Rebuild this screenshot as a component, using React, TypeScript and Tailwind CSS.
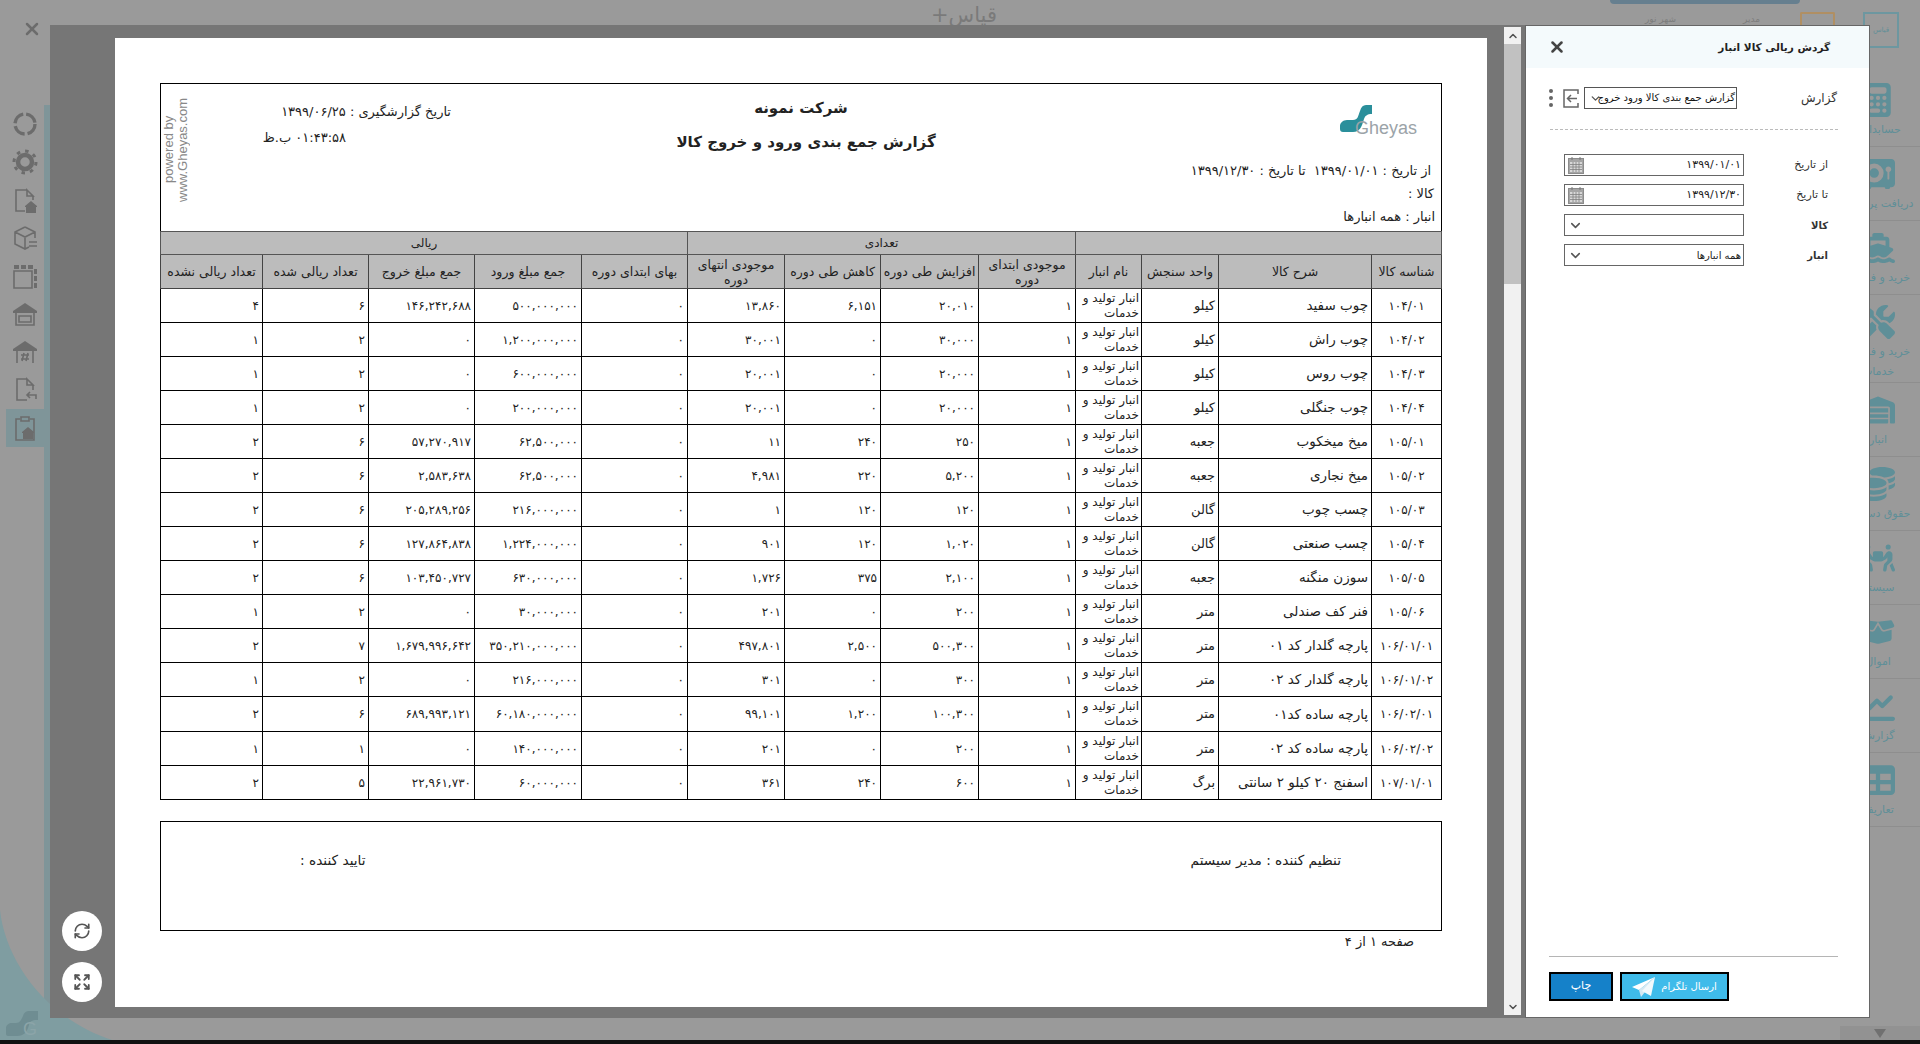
import { ChevronDown, ChevronUp, Expand, RefreshCw, X } from "lucide-react";
import {
  FaBoxOpen,
  FaCalculator,
  FaChartLine,
  FaCoins,
  FaPeopleCarryBox,
  FaScrewdriverWrench,
  FaShip,
  FaTable,
  FaVault,
  FaWarehouse,
} from "react-icons/fa6";
import type { ReactNode } from "react";

const WH = "انبار تولید و خدمات";

const rows: string[][] = [
  ["۱۰۴/۰۱", "چوب سفید", "کیلو", WH, "۱", "۲۰,۰۱۰", "۶,۱۵۱", "۱۳,۸۶۰", "۰", "۵۰۰,۰۰۰,۰۰۰", "۱۴۶,۲۴۲,۶۸۸", "۶", "۴"],
  ["۱۰۴/۰۲", "چوب راش", "کیلو", WH, "۱", "۳۰,۰۰۰", "۰", "۳۰,۰۰۱", "۰", "۱,۲۰۰,۰۰۰,۰۰۰", "۰", "۲", "۱"],
  ["۱۰۴/۰۳", "چوب روس", "کیلو", WH, "۱", "۲۰,۰۰۰", "۰", "۲۰,۰۰۱", "۰", "۶۰۰,۰۰۰,۰۰۰", "۰", "۲", "۱"],
  ["۱۰۴/۰۴", "چوب جنگلی", "کیلو", WH, "۱", "۲۰,۰۰۰", "۰", "۲۰,۰۰۱", "۰", "۲۰۰,۰۰۰,۰۰۰", "۰", "۲", "۱"],
  ["۱۰۵/۰۱", "میخ میخکوب", "جعبه", WH, "۱", "۲۵۰", "۲۴۰", "۱۱", "۰", "۶۲,۵۰۰,۰۰۰", "۵۷,۲۷۰,۹۱۷", "۶", "۲"],
  ["۱۰۵/۰۲", "میخ نجاری", "جعبه", WH, "۱", "۵,۲۰۰", "۲۲۰", "۴,۹۸۱", "۰", "۶۲,۵۰۰,۰۰۰", "۲,۵۸۳,۶۳۸", "۶", "۲"],
  ["۱۰۵/۰۳", "چسب چوب", "گالن", WH, "۱", "۱۲۰", "۱۲۰", "۱", "۰", "۲۱۶,۰۰۰,۰۰۰", "۲۰۵,۲۸۹,۲۵۶", "۶", "۲"],
  ["۱۰۵/۰۴", "چسب صنعتی", "گالن", WH, "۱", "۱,۰۲۰", "۱۲۰", "۹۰۱", "۰", "۱,۲۲۴,۰۰۰,۰۰۰", "۱۲۷,۸۶۴,۸۳۸", "۶", "۲"],
  ["۱۰۵/۰۵", "سوزن منگنه", "جعبه", WH, "۱", "۲,۱۰۰", "۳۷۵", "۱,۷۲۶", "۰", "۶۳۰,۰۰۰,۰۰۰", "۱۰۳,۴۵۰,۷۲۷", "۶", "۲"],
  ["۱۰۵/۰۶", "فنر کف صندلی", "متر", WH, "۱", "۲۰۰", "۰", "۲۰۱", "۰", "۳۰,۰۰۰,۰۰۰", "۰", "۲", "۱"],
  ["۱۰۶/۰۱/۰۱", "پارچه گلدار کد ۰۱", "متر", WH, "۱", "۵۰۰,۳۰۰", "۲,۵۰۰", "۴۹۷,۸۰۱", "۰", "۳۵۰,۲۱۰,۰۰۰,۰۰۰", "۱,۶۷۹,۹۹۶,۶۴۲", "۷", "۲"],
  ["۱۰۶/۰۱/۰۲", "پارچه گلدار کد ۰۲", "متر", WH, "۱", "۳۰۰", "۰", "۳۰۱", "۰", "۲۱۶,۰۰۰,۰۰۰", "۰", "۲", "۱"],
  ["۱۰۶/۰۲/۰۱", "پارچه ساده کد۰۱", "متر", WH, "۱", "۱۰۰,۳۰۰", "۱,۲۰۰", "۹۹,۱۰۱", "۰", "۶۰,۱۸۰,۰۰۰,۰۰۰", "۶۸۹,۹۹۳,۱۲۱", "۶", "۲"],
  ["۱۰۶/۰۲/۰۲", "پارچه ساده کد ۰۲", "متر", WH, "۱", "۲۰۰", "۰", "۲۰۱", "۰", "۱۴۰,۰۰۰,۰۰۰", "۰", "۱", "۱"],
  ["۱۰۷/۰۱/۰۱", "اسفنج ۲۰ کیلو ۲ سانتی", "برگ", WH, "۱", "۶۰۰", "۲۴۰", "۳۶۱", "۰", "۶۰,۰۰۰,۰۰۰", "۲۲,۹۶۱,۷۳۰", "۵", "۲"],
];

const headers = [
  "شناسه کالا",
  "شرح کالا",
  "واحد سنجش",
  "نام انبار",
  "موجودی ابتدای دوره",
  "افزایش طی دوره",
  "کاهش طی دوره",
  "موجودی انتهای دوره",
  "بهای ابتدای دوره",
  "جمع مبلغ ورود",
  "جمع مبلغ خروج",
  "تعداد ریالی شده",
  "تعداد ریالی نشده",
];

const colClasses = [
  "w-[70px]",
  "w-[153px]",
  "w-[77px]",
  "w-[66px]",
  "w-[97px]",
  "w-[98px]",
  "w-[96px]",
  "w-[97px]",
  "w-[106px]",
  "w-[107px]",
  "w-[106px]",
  "w-[106px]",
  "w-[102px]",
];

const sideMenu = [
  { label: "حسابداری", Icon: FaCalculator, h: "h-[74px]", wrap: "whitespace-nowrap" },
  { label: "دریافت پرداخت", Icon: FaVault, h: "h-[74px]", wrap: "whitespace-nowrap" },
  { label: "خرید و فروش", Icon: FaShip, h: "h-[74px]", wrap: "whitespace-nowrap" },
  { label: "خرید و فروش خدمات", Icon: FaScrewdriverWrench, h: "h-[88px]", wrap: "w-[70px]" },
  { label: "انبار", Icon: FaWarehouse, h: "h-[74px]", wrap: "whitespace-nowrap" },
  { label: "حقوق دستمزد", Icon: FaCoins, h: "h-[74px]", wrap: "whitespace-nowrap" },
  { label: "سیستم", Icon: FaPeopleCarryBox, h: "h-[74px]", wrap: "whitespace-nowrap" },
  { label: "اموال", Icon: FaBoxOpen, h: "h-[74px]", wrap: "whitespace-nowrap" },
  { label: "گزارش", Icon: FaChartLine, h: "h-[74px]", wrap: "whitespace-nowrap" },
  { label: "تعاریف", Icon: FaTable, h: "h-[74px]", wrap: "whitespace-nowrap" },
];

const cellFont = (i: number) => {
  if (i === 0) return "px-[3px] text-center text-[12px] tracking-[1.3px] whitespace-nowrap";
  if (i === 1) return "px-[3px] text-right text-[13.500px] whitespace-nowrap";
  if (i === 2) return "px-[3px] text-right text-[13px] whitespace-nowrap";
  if (i === 3) return "px-[2px] text-right text-[12px] leading-[15px] whitespace-normal";
  return "px-[3px] text-right text-[12px] whitespace-nowrap";
};

const LeftIcon = ({ children, active }: { children: ReactNode; active?: boolean }) => (
  <div
    className={`flex h-[38px] w-[38px] items-center justify-center ${
      active ? "bg-[#7f9599]" : ""
    }`}
  >
    <svg
      width="26"
      height="26"
      viewBox="0 0 26 26"
      fill="none"
      stroke="#6c6c6c"
      strokeWidth="1.6"
    >
      {children}
    </svg>
  </div>
);

const House = ({ x, y }: { x: number; y: number }) => (
  <path
    transform={`translate(${x} ${y})`}
    d="M0 5 6 0l6 5v1h-1v6H1V6H0z"
    fill="#6c6c6c"
    stroke="none"
  />
);

const CalendarIcon = () => (
  <svg width="16" height="17" viewBox="0 0 16 17" className="shrink-0">
    <rect x="0.5" y="1.5" width="15" height="15" fill="#a5a5a5" stroke="#8c8c8c" />
    <rect x="2" y="5" width="12" height="10" fill="#d8d8d8" />
    <path d="M2 7.5h12M2 10h12M2 12.5h12M5 5v10M8 5v10M11 5v10" stroke="#808080" strokeWidth="0.8" />
    <path d="M4 0v3M12 0v3" stroke="#777" />
  </svg>
);

const DateField = ({ label, value }: { label: string; value: string }) => (
  <div className="flex items-center">
    <span className="w-[84px] text-[11px] text-[#333]">{label}</span>
    <div className="flex h-[22px] w-[180px] items-center justify-between border border-[#666] pr-[2px] pl-[3px] text-[11px] text-[#222]">
      <span>{value}</span>
      <CalendarIcon />
    </div>
  </div>
);

const SelectField = ({ label, value }: { label: string; value: string }) => (
  <div className="flex items-center">
    <span className="w-[84px] text-[10px] font-bold text-[#333]">{label}</span>
    <div className="flex h-[22px] w-[180px] items-center justify-between border border-[#666] pr-[2px] pl-[3px] text-[10px] text-[#222]">
      <span>{value}</span>
      <ChevronDown size={15} strokeWidth={2.5} color="#555" />
    </div>
  </div>
);

const App = () => {
  return (
    <div className="relative flex h-[1044px] w-[1920px] flex-col overflow-hidden bg-[#9a9a9a] font-['DejaVu_Sans',sans-serif]">
      {/* page behind the dialog */}
      <div className="flex h-[1040px]">
        <aside className="flex w-[50px] flex-col">
          <div className="flex h-[105px] items-start pt-[19px] pl-[22px]">
            <X size={20} strokeWidth={3} color="#6c6c6c" />
          </div>
          <div className="flex flex-1 flex-col items-start border-r-[6px] border-[#7f9599] pl-[6px] text-[#6c6c6c]">
            <LeftIcon>
              <circle cx="13" cy="13" r="10" strokeWidth="3.4" strokeDasharray="13 3" />
            </LeftIcon>
            <LeftIcon>
              <circle cx="13" cy="13" r="7" strokeWidth="4.5" />
              <circle cx="13" cy="13" r="11" strokeWidth="3" strokeDasharray="3.5 5.1" />
            </LeftIcon>
            <LeftIcon>
              <path d="M15 3H4v21h9M15 3l6 6h-6zM21 9v4" />
              <House x={13} y={14} />
            </LeftIcon>
            <LeftIcon>
              <path d="M13 2 3 7v12l10 5 4-2M13 2l10 5v6M3 7l10 5 10-5M13 12v12M17 17h8M17 21h8" />
            </LeftIcon>
            <LeftIcon>
              <path d="M2 8h18v17H2z" />
              <path d="M2 2h5v4H2zM9 2h5v4H9zM16 2h5v4h-5zM22 6h3v5h-3zM22 13h3v5h-3zM22 20h3v5h-3z" fill="#6c6c6c" stroke="none" />
            </LeftIcon>
            <LeftIcon>
              <path d="M1 10 13 2l12 8v2H1z" fill="#6c6c6c" stroke="none" />
              <path d="M4 12v12h18V12M7 15h12v6H7z" />
            </LeftIcon>
            <LeftIcon>
              <path d="M1 10 13 2l12 8v2H1z" fill="#6c6c6c" stroke="none" />
              <path d="M5 12v12M21 12v12M10 22l2-8M14 22l2-8M9 16h8M9 20h8" />
            </LeftIcon>
            <LeftIcon>
              <path d="M15 2H5v21h10M15 2l6 6h-6zM21 8v5M24 22v-4h-9M18 15l-3 3 3 3" />
            </LeftIcon>
            <LeftIcon active>
              <path d="M8 4H4v21h18V4h-4M9 2h8v4H9z" />
              <House x={10} y={12} />
            </LeftIcon>
          </div>
        </aside>

        <div className="flex flex-1 flex-col">
          <div className="flex h-[25px] items-start">
            <span dir="rtl" className="ml-[882px] w-[65px] text-[21px] leading-[30px] text-[#7a7a7a]">
              قیاس+
            </span>
            <div dir="rtl" className="ml-[613px] w-[190px]">
              <div className="h-[4px] rounded-b-[4px] bg-[#667f8f]" />
              <div className="mt-[10px] flex justify-between pr-[40px] pl-[35px] text-[9px] leading-[11px] text-[#7d7d7d]">
                <span>مدیر</span>
                <span>شهر نور</span>
              </div>
            </div>
            <div className="mt-[12px] h-[13px] w-[35px] rounded-t-[2px] border-x-2 border-t-2 border-[#b08f63]" />
          </div>
        </div>

        <aside dir="rtl" className="w-[84px] text-[#5f8f98]">
          <div className="h-[73px] pt-[12px] pr-[21px]">
            <div className="flex h-[36px] w-[36px] items-center justify-center border-2 border-[#6d97a0] text-[7px]">
              قیاس
            </div>
          </div>
          {sideMenu.map(({ label, Icon, h, wrap }) => (
            <div
              key={label}
              className={`flex flex-col items-center border-b border-[#8e8e8e] ${h} pt-[10px] text-[11px]`}
            >
              <Icon size={34} />
              <span className={`mt-[3px] text-center leading-[20px] ${wrap}`}>{label}</span>
            </div>
          ))}
        </aside>
      </div>
      <div className="h-[4px] bg-[#111111]" />

      {/* bottom left wave of the page background */}
      <svg
        className="absolute bottom-[4px] left-0"
        width="130"
        height="130"
        viewBox="0 0 130 130"
      >
        <path d="M0 0C6 55 50 110 112 130H0z" fill="#7f9da1" />
        <path
          d="M6 118c0-3 3-5 6-5h4c4 0 5-3 7-7 1-4 4-5 6-5h9v9c-4 0-8 0-9 5-2 7-5 11-12 11H8c-1 0-2-1-2-2z"
          fill="#6f8d92"
        />
        <text x="23" y="125" fontFamily="Liberation Sans" fontSize="18" fill="#8ba4a8">
          G
        </text>
      </svg>
      <div className="absolute right-0 bottom-[4px] flex h-[14px] w-[80px] items-center justify-center bg-[#929292]">
        <div className="h-0 w-0 border-x-[6px] border-t-[9px] border-x-transparent border-t-[#707070]" />
      </div>

      {/* dialog */}
      <div className="absolute top-[25px] left-[50px] flex h-[993px] w-[1819px] bg-[#767676]">
        <div className="relative flex-1 pt-[13px] pr-[17px] pb-[11px] pl-[65px]">
          <div className="h-full bg-white pt-[45px] pr-[45px] pl-[45px] text-[#222]">
            <div className="flex h-[148px] border-x border-t border-black">
              <div className="flex w-[30px] rotate-180 justify-center pt-[16px] pr-[1px] font-['Liberation_Sans',sans-serif] text-[13px] leading-[14px] text-[#888] [writing-mode:vertical-rl]">
                <div className="text-center">
                  powered by
                  <br />
                  www.Gheyas.com
                </div>
              </div>
              <div dir="rtl" className="w-[260px] pt-[15px] text-[13px] leading-[26px]">
                <div>تاریخ گزارشگیری : ۱۳۹۹/۰۶/۲۵</div>
                <div className="pr-[105px]">۰۱:۴۳:۵۸ ب.ظ</div>
              </div>
              <div dir="rtl" className="flex-1 pt-[11px] text-center font-bold">
                <div className="pr-[10px] text-[15px] leading-[26px]">شرکت نمونه</div>
                <div className="mt-[8px] text-[15px] leading-[26px]">گزارش جمع بندی ورود و خروج کالا</div>
              </div>
              <div dir="rtl" className="w-[280px] pt-[20px] pr-[9px] text-[13px]">
                <div dir="ltr" className="flex h-[55px] items-start pl-[179px]">
                  <svg width="80" height="34" viewBox="0 0 80 34">
                    <path
                      d="M0 22c0-3 3-6 7-6h6c5 0 5-4 7-9 1-4 3-6 6-6h6v9c-5 0-7 2-8 5-2 7-4 13-11 13H3c-2 0-3-1-3-3z"
                      fill="#2a8f9b"
                    />
                    <text x="15" y="30" fontFamily="Liberation Sans" fontSize="18" fill="#9ba3a8">
                      Gheyas
                    </text>
                  </svg>
                </div>
                <div className="leading-[23px]">
                  <div className="pr-[1px]">از تاریخ : ۱۳۹۹/۰۱/۰۱&nbsp;&nbsp;تا تاریخ : ۱۳۹۹/۱۲/۳۰</div>
                  <div className="-mr-[2px]">کالا :</div>
                  <div className="-mr-[3px]">انبار : همه انبارها</div>
                </div>
              </div>
            </div>

            <table dir="rtl" className="w-[1281px] table-fixed border-collapse">
              <colgroup>
                {colClasses.map((c, i) => (
                  <col key={i} className={c} />
                ))}
              </colgroup>
              <thead className="bg-[#bcbcbc] text-center">
                <tr className="h-[23px] text-[12px]">
                  <th colSpan={4} className="border border-[#555] font-normal" />
                  <th colSpan={4} className="border border-[#555] font-normal">تعدادی</th>
                  <th colSpan={5} className="border border-[#555] font-normal">ریالی</th>
                </tr>
                <tr className="h-[34px] text-[12.500px]">
                  {headers.map((h) => (
                    <th key={h} className="border border-[#444] px-0 leading-[15px] font-normal">
                      {h}
                    </th>
                  ))}
                </tr>
              </thead>
              <tbody>
                {rows.map((row, r) => (
                  <tr key={row[0]} className={r === 12 ? "h-[35px]" : "h-[34px]"}>
                    {row.map((cell, i) => (
                      <td key={i} className={`border border-black ${cellFont(i)}`}>
                        {cell}
                      </td>
                    ))}
                  </tr>
                ))}
              </tbody>
            </table>

            <div
              dir="rtl"
              className="mt-[21px] flex h-[110px] w-[1282px] justify-between border border-black pt-[29px] pr-[100px] pl-[139px] text-[13.700px] leading-[18px]"
            >
              <span>تنظیم کننده : مدیر سیستم</span>
              <span>تایید کننده :</span>
            </div>
            <div dir="rtl" className="pt-[1px] pr-[28px] text-[13px]">
              صفحه ۱ از ۴
            </div>
          </div>

          <div className="absolute bottom-[16px] left-[12px] flex flex-col gap-[11px]">
            <div className="flex h-[40px] w-[40px] items-center justify-center rounded-full bg-white">
              <RefreshCw size={18} strokeWidth={2.2} color="#555" />
            </div>
            <div className="flex h-[40px] w-[40px] items-center justify-center rounded-full bg-white">
              <Expand size={18} strokeWidth={2.4} color="#555" />
            </div>
          </div>
        </div>

        {/* scrollbar */}
        <div className="mt-[2px] mr-[4px] mb-[3px] flex w-[17px] shrink-0 flex-col bg-[#f1f1f1]">
          <div className="flex h-[17px] items-center justify-center">
            <ChevronUp size={12} strokeWidth={3} color="#505050" />
          </div>
          <div className="h-[240px] bg-[#c1c1c1]" />
          <div className="mt-auto flex h-[17px] items-center justify-center">
            <ChevronDown size={12} strokeWidth={3} color="#505050" />
          </div>
        </div>

        {/* parameters panel */}
        <div dir="rtl" className="flex w-[345px] shrink-0 flex-col border border-[#666] bg-white">
          <div className="flex h-[42px] items-center justify-between bg-[#f4fafc] pr-[39px] pl-[22px]">
            <span className="pt-[2px] text-[10.500px] font-bold text-[#222]">گردش ریالی کالا انبار</span>
            <X size={18} strokeWidth={3.4} color="#444" />
          </div>

          <div className="flex items-center pt-[19px] pr-[32px]">
            <span className="w-[100px] text-[12px] text-[#333]">گزارش</span>
            <div className="relative h-[22px] w-[153px] overflow-hidden border border-[#555] pr-[1px] text-[10px] leading-[19px] whitespace-nowrap text-[#111]">
              گزارش جمع بندی کالا ورود خروج
              <ChevronDown className="absolute top-[4px] left-[4px]" size={13} strokeWidth={2.5} color="#555" />
            </div>
            <svg className="mr-[5px]" width="16" height="19" viewBox="0 0 16 19" fill="none" stroke="#666" strokeWidth="1.5">
              <path d="M15 5V1H1v17h14v-4M14 9.5H5M8 6 4.500 9.500 8 13" />
            </svg>
            <div className="mr-[10px] flex flex-col gap-[3px]">
              <span className="h-[4px] w-[4px] rounded-full bg-[#666]" />
              <span className="h-[4px] w-[4px] rounded-full bg-[#666]" />
              <span className="h-[4px] w-[4px] rounded-full bg-[#666]" />
            </div>
          </div>

          <div className="mt-[20px] mr-[31px] ml-[24px] border-t border-dashed border-[#bbb]" />

          <div className="mt-[24px] flex flex-col gap-[8px] pr-[41px]">
            <DateField label="از تاریخ" value="۱۳۹۹/۰۱/۰۱" />
            <DateField label="تا تاریخ" value="۱۳۹۹/۱۲/۳۰" />
            <SelectField label="کالا" value="" />
            <SelectField label="انبار" value="همه انبارها" />
          </div>

          <div className="mt-auto mr-[31px] ml-[23px] border-t border-[#b5b5b5] pt-[15px] pb-[16px]">
            <div dir="ltr" className="flex gap-[7px]">
              <button className="h-[29px] w-[64px] border-2 border-black bg-[#1581c9] text-[11px] text-white">
                چاپ
              </button>
              <button className="flex h-[29px] w-[109px] items-center justify-center gap-[5px] border-2 border-black bg-[#3fbbea] text-[10px] text-white">
                <svg width="24" height="20" viewBox="0 0 24 20">
                  <path d="M23 0 0 10l7 3z" fill="#ffffff" />
                  <path d="M23 0 7 13l2 7 4-5z" fill="#d5e9f3" />
                  <path d="M23 0 10 14l9 5z" fill="#f2f9fc" />
                </svg>
                <span>ارسال تلگرام</span>
              </button>
            </div>
          </div>
        </div>
      </div>
    </div>
  );
};

export default App;
